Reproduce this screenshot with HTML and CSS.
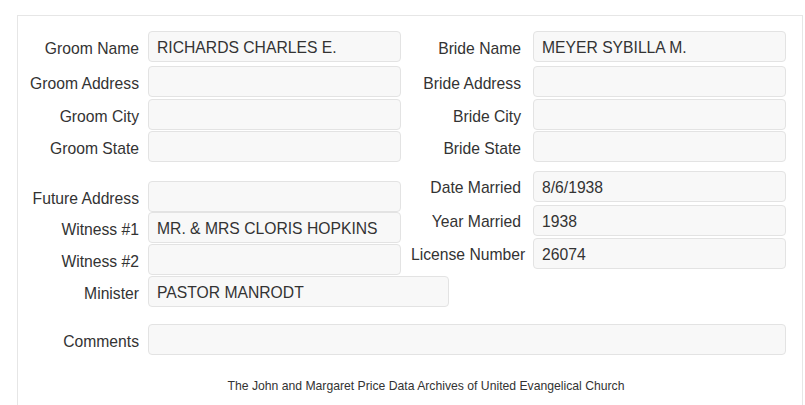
FILE: index.html
```html
<!DOCTYPE html>
<html lang="en">
<head>
<meta charset="utf-8">
<title>Marriage Record</title>
<link rel="stylesheet" href="styles.css">
</head>
<body>
<div class="panel">
  <div class="block">
    <div class="col col-left">
      <div class="row sp4"><div class="label">Groom Name</div><div class="field">RICHARDS CHARLES E.</div></div>
      <div class="row sp2"><div class="label">Groom Address</div><div class="field"></div></div>
      <div class="row sp1"><div class="label">Groom City</div><div class="field"></div></div>
      <div class="row"><div class="label">Groom State</div><div class="field"></div></div>
    </div>
    <div class="col col-right">
      <div class="row sp4"><div class="label">Bride Name</div><div class="field">MEYER SYBILLA M.</div></div>
      <div class="row sp2"><div class="label">Bride Address</div><div class="field"></div></div>
      <div class="row sp1"><div class="label">Bride City</div><div class="field"></div></div>
      <div class="row"><div class="label">Bride State</div><div class="field"></div></div>
    </div>
  </div>
  <div class="block block-lower">
    <div class="col col-left lower-left">
      <div class="row sp0"><div class="label">Future Address</div><div class="field"></div></div>
      <div class="row sp1"><div class="label">Witness #1</div><div class="field">MR. &amp; MRS CLORIS HOPKINS</div></div>
      <div class="row sp1"><div class="label">Witness #2</div><div class="field"></div></div>
      <div class="row"><div class="label">Minister</div><div class="field field-wide">PASTOR MANRODT</div></div>
    </div>
    <div class="col col-right">
      <div class="row sp3"><div class="label lab-up">Date Married</div><div class="field">8/6/1938</div></div>
      <div class="row sp2"><div class="label lab-up">Year Married</div><div class="field">1938</div></div>
      <div class="row"><div class="label lab-up">License Number</div><div class="field">26074</div></div>
    </div>
  </div>
  <div class="row comments"><div class="label">Comments</div><div class="field field-full"></div></div>
  <p class="footer">The John and Margaret Price Data Archives of United Evangelical Church</p>
</div>
</body>
</html>
```

FILE: styles.css
```css
html, body {
  margin: 0;
  padding: 0;
  background: #ffffff;
}
body {
  font-family: "Liberation Sans", Arial, sans-serif;
  color: #333333;
  font-size: 15.7px;
}
.panel {
  margin: 15px 0 0 17px;
  width: 786px;
  box-sizing: border-box;
  border: 1px solid #e6e6e6;
  border-bottom: none;
  padding-top: 15px;
  height: 400px;
}
.block {
  display: flex;
  align-items: flex-start;
}
.block-lower {
  margin-top: 9px;
}
.col {
  display: flex;
  flex-direction: column;
}
.col-left {
  width: 383px;
  flex: none;
}
.col-right {
  padding-left: 10px;
}
.lower-left {
  padding-top: 10px;
}
.row {
  display: flex;
  height: 31px;
}
.sp0 { margin-bottom: 0; }
.sp1 { margin-bottom: 1px; }
.sp2 { margin-bottom: 2px; }
.sp3 { margin-bottom: 3px; }
.sp4 { margin-bottom: 4px; }
.label {
  flex: none;
  box-sizing: border-box;
  text-align: right;
  white-space: nowrap;
  line-height: 31px;
  padding-top: 2px;
  font-size: 15.7px;
}
.col-left .label, .comments .label {
  width: 121px;
  margin-right: 9px;
}
.col-right .label {
  width: 110px;
  margin-right: 12px;
}
.lab-up {
  padding-top: 1px;
}
.field {
  flex: none;
  box-sizing: border-box;
  width: 253px;
  height: 31px;
  border: 1px solid #e3e3e3;
  border-radius: 4px;
  background: #f8f8f8;
  padding: 1px 8px 0;
  line-height: 29px;
  font-size: 15.7px;
  white-space: nowrap;
  color: #333333;
}
.field-wide {
  width: 301px;
}
.field-full {
  width: 638px;
}
.comments {
  margin-top: 17px;
}
.footer {
  margin: 23px 0 0;
  padding-left: 32px;
  text-align: center;
  font-size: 12.2px;
  line-height: 16px;
  color: #333333;
}
```
